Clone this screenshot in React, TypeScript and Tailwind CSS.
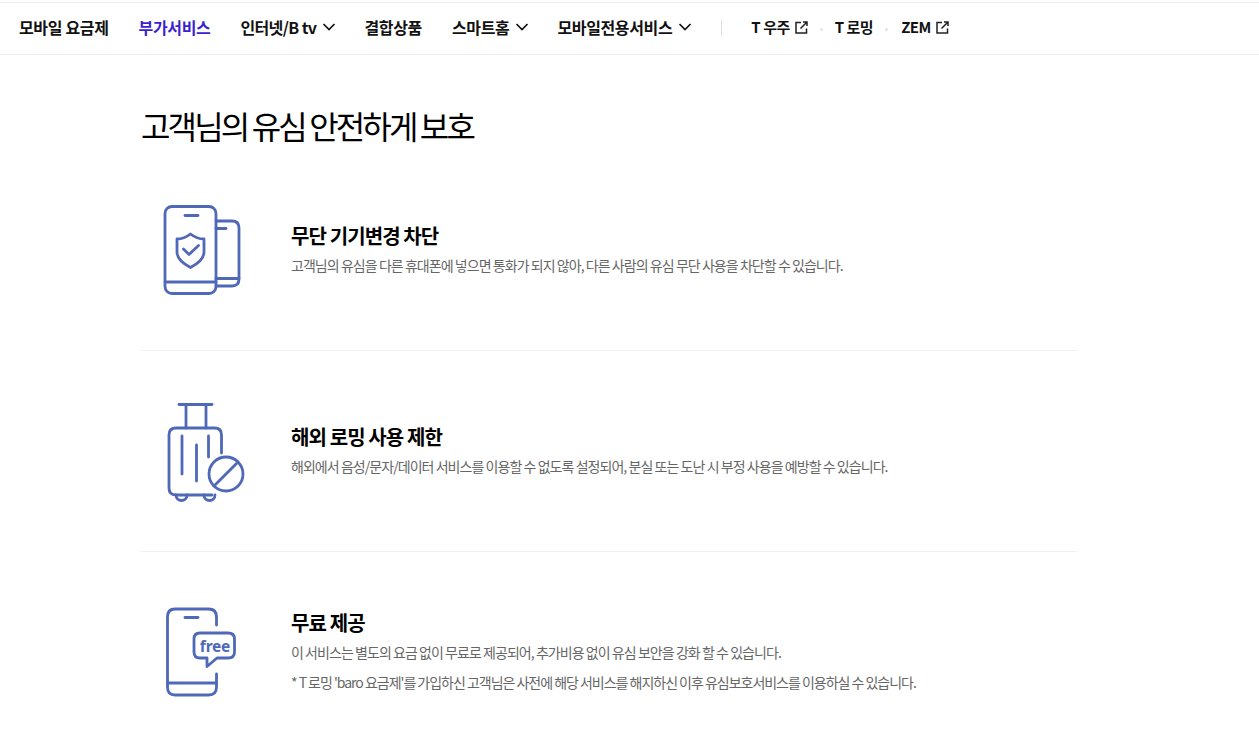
import React from 'react';

const font = { fontFamily: '"Noto Sans CJK KR", "Noto Sans", sans-serif' };

function Chevron() {
  return (
    <svg width="14" height="14" viewBox="0 0 14 14" fill="none" stroke="#111" strokeWidth="1.7" className="ml-[6px]">
      <path d="M1.5 4 L7 9.5 L12.5 4" />
    </svg>
  );
}

function External() {
  return (
    <svg width="13" height="13" viewBox="0 0 13 13" fill="none" stroke="#222" strokeWidth="1.5" className="ml-[5px]">
      <path d="M6 1.5 H1 V12 H11.5 V7.5" />
      <path d="M5.5 7.5 L11.5 1.5 M8 1 H12 V5" />
    </svg>
  );
}

function Dot({ className }: { className: string }) {
  return <span className={`w-[3px] h-[3px] bg-[#e4e4e4] rounded-full mt-[3px] ${className}`} />;
}

function NavItem({ label, active, chevron, className }: { label: string; active?: boolean; chevron?: boolean; className: string }) {
  return (
    <a className={`flex items-center text-[16px] font-bold whitespace-nowrap mb-[2px] ${active ? 'text-[#3b1fd1]' : 'text-[#111]'} ${className}`}>
      {label}
      {chevron && <Chevron />}
    </a>
  );
}

function PhoneShield() {
  return (
    <svg width="105" height="105" viewBox="0 0 105 105" fill="none" stroke="#4f69b8" strokeWidth="2.8" strokeLinecap="round" strokeLinejoin="round">
      <rect x="15" y="11.5" width="51" height="87" rx="7" />
      <path d="M15 87 H66" />
      <path d="M35 20.5 H48" />
      <path d="M66 26 H82 Q89 26 89 33 V84 Q89 91 82 91 H66" />
      <path d="M66 33.5 H76" />
      <path d="M66 83.5 H89" />
      <path d="M40.5 39 Q47 44 54 44 V57 Q54 65.5 40.5 72.5 Q27 65.5 27 57 V44 Q34 44 40.5 39 Z" />
      <path d="M33.5 54 L39 59.5 L48.5 50.5" />
    </svg>
  );
}

function Suitcase() {
  return (
    <svg width="105" height="110" viewBox="0 0 105 110" fill="none" stroke="#4f69b8" strokeWidth="2.8" strokeLinecap="round" strokeLinejoin="round">
      <path d="M29 6.5 H62" />
      <path d="M36 7 V30 M56 7 V30" />
      <path d="M71.5 55 V37 Q71.5 30 64.5 30 H26 Q19 30 19 37 V90 Q19 97 26 97 H62" />
      <path d="M32 38 V76 M46.5 47 V83 M58.5 38 V59" />
      <path d="M26 97 A5.5 5.5 0 0 0 37 97 M54 97 A5.5 5.5 0 0 0 65 97" />
      <circle cx="76" cy="76" r="17" />
      <path d="M64 88 L88 64" />
    </svg>
  );
}

function PhoneFree() {
  return (
    <svg width="105" height="100" viewBox="0 0 105 100" fill="none" stroke="#4f69b8" strokeWidth="2.8" strokeLinecap="round" strokeLinejoin="round">
      <path d="M66.5 25 V17 Q66.5 9 58.5 9 H25 Q17.5 9 17.5 17 V87 Q17.5 95 25 95 H58.5 Q66.5 95 66.5 87 V74" />
      <path d="M17.5 83 H66.5" />
      <path d="M35 17.5 H48" />
      <path d="M50 33 H78 Q84.5 33 84.5 39 V52 Q84.5 58 78 58 H67 L57 66.5 V58 H50 Q44 58 44 52 V39 Q44 33 50 33 Z" />
      <text x="65" y="51.5" textAnchor="middle" fontSize="15.5" fontWeight="700" letterSpacing="-0.2" fill="#4f69b8" stroke="none" fontFamily="Noto Sans, sans-serif">free</text>
    </svg>
  );
}

function Row({ icon, iconClass, title, lines, last }: { icon: React.ReactNode; iconClass: string; title: string; lines: string[]; last?: boolean }) {
  return (
    <div className={`flex h-[201px] items-center ${last ? '' : 'border-b border-[#f0f0f0]'}`}>
      <div className={`w-[151px] pl-[10px] shrink-0 flex items-center ${iconClass}`}>{icon}</div>
      <div className="mb-[4px]">
        <h3 className="text-[20px] font-bold text-black tracking-[-0.9px] leading-[28px]">{title}</h3>
        {lines.map((line, i) => (
          <p key={i} className={`text-[14px] text-[#666] leading-[20px] ${i === 0 ? 'mt-[5px] tracking-[-0.95px]' : 'mt-[10px] tracking-[-1.02px]'}`}>{line}</p>
        ))}
      </div>
    </div>
  );
}

export default function App() {
  return (
    <div style={font} className="w-full bg-white overflow-hidden h-[731px]">
      <nav className="mt-[2px] h-[53px] border-t border-b border-[#eeeeee] flex items-center pl-[19px] pb-[2px]">
        <NavItem label="모바일 요금제" className="mr-[30px] tracking-[-0.35px]" />
        <NavItem label="부가서비스" active className="mr-[30px] tracking-[-0.35px]" />
        <NavItem label="인터넷/B tv" chevron className="mr-[28px] tracking-[-0.6px]" />
        <NavItem label="결합상품" className="mr-[30px] tracking-[-0.35px]" />
        <NavItem label="스마트홈" chevron className="mr-[28px] tracking-[-0.35px]" />
        <NavItem label="모바일전용서비스" chevron className="mr-[29px] tracking-[-0.35px]" />
        <span className="w-px h-4 bg-[#e0e0e0] mr-[29px]" />
        <a className="flex items-center text-[15px] font-bold tracking-[-0.5px] text-[#111]">T 우주<External /></a>
        <Dot className="ml-[12px] mr-[12px]" />
        <a className="flex items-center text-[15px] font-bold tracking-[-0.5px] text-[#111]">T 로밍</a>
        <Dot className="ml-[12px] mr-[13px]" />
        <a className="flex items-center text-[15px] font-bold tracking-[-0.5px] text-[#111]">ZEM<External /></a>
      </nav>
      <main className="ml-[140px] w-[937px]">
        <h1 className="text-[32px] font-normal text-black tracking-[-2.85px] leading-[44px] mt-[48px] mb-[3px] ml-[1px]">고객님의 유심 안전하게 보호</h1>
        <Row
          icon={<PhoneShield />}
          iconClass="mb-[6px]"
          title="무단 기기변경 차단"
          lines={['고객님의 유심을 다른 휴대폰에 넣으면 통화가 되지 않아, 다른 사람의 유심 무단 사용을 차단할 수 있습니다.']}
        />
        <Row
          icon={<Suitcase />}
          iconClass="mt-[4px]"
          title="해외 로밍 사용 제한"
          lines={['해외에서 음성/문자/데이터 서비스를 이용할 수 없도록 설정되어, 분실 또는 도난 시 부정 사용을 예방할 수 있습니다.']}
        />
        <Row
          last
          icon={<PhoneFree />}
          iconClass="mb-[6px]"
          title="무료 제공"
          lines={[
            '이 서비스는 별도의 요금 없이 무료로 제공되어, 추가비용 없이 유심 보안을 강화 할 수 있습니다.',
            "* T 로밍 'baro 요금제'를 가입하신 고객님은 사전에 해당 서비스를 해지하신 이후 유심보호서비스를 이용하실 수 있습니다.",
          ]}
        />
      </main>
    </div>
  );
}
